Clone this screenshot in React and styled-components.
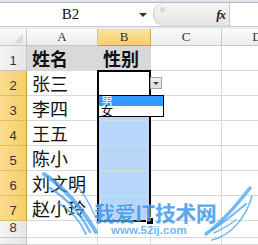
import React from 'react'
import styled, { createGlobalStyle } from 'styled-components'

const GlobalStyle = createGlobalStyle`
  html, body { margin: 0; padding: 0; background: #fff; }
  body { width: 258px; height: 245px; overflow: hidden; }
  * { box-sizing: border-box; }
`

const CJK = `"Noto Sans CJK SC", "Noto Sans", sans-serif`

const Window = styled.div`
  position: relative;
  width: 258px;
  height: 245px;
  overflow: hidden;
  display: flex;
  flex-direction: column;
  background: #fff;
`

const TopStrip = styled.div`
  flex: 0 0 3px;
  background: linear-gradient(#eef0f3, #cfd5dc);
  border-bottom: 1px solid #b9c0c9;
`

const FormulaRow = styled.div`
  flex: 0 0 24px;
  display: flex;
  background: #fff;
  border-bottom: 1px solid #c9ccd1;
`

const NameBox = styled.div`
  width: 153px;
  display: flex;
  align-items: center;
  font-family: "Liberation Serif", serif;
  font-size: 15px;
  color: #111;
`

const NameText = styled.span`
  flex: 1;
  text-align: center;
  padding-left: 2px;
`

const NameArrow = styled.span`
  width: 0;
  height: 0;
  margin-right: 6px;
  border-left: 4px solid transparent;
  border-right: 4px solid transparent;
  border-top: 4px solid #333;
`

const FxArea = styled.div`
  width: 77px;
  display: flex;
  align-items: center;
  justify-content: flex-end;
  padding-right: 4px;
  background: linear-gradient(#f6f6f6, #e3e3e3);
  border-left: 1px solid #c4c4c4;
  border-top-left-radius: 12px;
  border-bottom-left-radius: 12px;
  border-right: 1px solid #c9c9c9;
  position: relative;
`

const Grip = styled.span`
  position: absolute;
  left: 6px;
  top: 4px;
  width: 5px;
  height: 5px;
  border-radius: 50%;
  background: #d6d6d6;
`

const Fx = styled.span`
  font-family: "Liberation Serif", serif;
  font-style: italic;
  font-weight: bold;
  font-size: 13px;
  color: #222;
  letter-spacing: -1px;
`

const FormulaInput = styled.div`
  flex: 1;
  background: #fff;
`

const Gap = styled.div`
  flex: 0 0 2px;
  background: #e9ebee;
`

const Sheet = styled.div`
  flex: 1 1 auto;
  min-height: 0;
  display: grid;
  grid-template-columns: 27px 71px 53px 71px 71px;
  grid-template-rows: 17px repeat(7, 25px) 17px 1fr;
  position: relative;
`

const Corner = styled.div`
  grid-row: 1;
  grid-column: 1;
  position: relative;
  background: linear-gradient(#fafafa, #ececec);
  border-right: 1px solid #c6c6c6;
  border-bottom: 1px solid #c6c6c6;
  &::after {
    content: '';
    position: absolute;
    right: 3px;
    bottom: 2px;
    border-left: 9px solid transparent;
    border-bottom: 9px solid #d8d8d8;
  }
`

const ColHead = styled.div`
  grid-row: 1;
  grid-column: ${p => p.$col};
  display: flex;
  align-items: center;
  justify-content: center;
  font-family: "Liberation Serif", serif;
  font-size: 13px;
  color: #333;
  background: ${p => p.$active
    ? 'linear-gradient(#fbe49f, #f6cf6d)'
    : 'linear-gradient(#fbfbfb, #ededed)'};
  border-right: 1px solid ${p => p.$active ? '#d3a94c' : '#c6c6c6'};
  border-bottom: 1px solid ${p => p.$active ? '#c79b3a' : '#c6c6c6'};
`

const RowHead = styled.div`
  grid-row: ${p => p.$row};
  grid-column: 1;
  display: flex;
  align-items: flex-end;
  justify-content: center;
  padding-bottom: 2px;
  font-family: "Liberation Sans", sans-serif;
  font-size: 13px;
  color: #333;
  background: ${p => p.$active
    ? 'linear-gradient(90deg, #fbdc8e, #f7ce6c)'
    : 'linear-gradient(90deg, #f3f3f3, #e6e6e6)'};
  border-right: 1px solid ${p => p.$active ? '#c79b3a' : '#c6c6c6'};
  border-bottom: 1px solid ${p => p.$active ? '#e2bb5c' : '#c6c6c6'};
`

const Cell = styled.div`
  grid-row: ${p => p.$row};
  grid-column: ${p => p.$col};
  position: relative;
  display: flex;
  align-items: flex-end;
  padding: 0 0 1px 5px;
  font-family: ${CJK};
  font-size: 18px;
  line-height: 22px;
  font-weight: ${p => p.$bold ? 700 : 400};
  color: #111;
  background: ${p => p.$fill || '#fff'};
  border-right: 1px solid #d9d9d9;
  border-bottom: 1px solid #d9d9d9;
  white-space: nowrap;
`

const Selection = styled.div`
  grid-column: 3;
  grid-row: 3 / 9;
  margin: -1px 0 -1px -1px;
  border: 2px solid #000;
  position: relative;
  pointer-events: none;
  z-index: 2;
`

const FillHandle = styled.span`
  position: absolute;
  right: -4px;
  bottom: -4px;
  width: 6px;
  height: 6px;
  background: #000;
  outline: 1px solid #fff;
`

const DropButton = styled.div`
  position: absolute;
  left: 100%;
  top: 6px;
  width: 12px;
  height: 12px;
  display: flex;
  align-items: center;
  justify-content: center;
  background: linear-gradient(#f1f1f1, #dcdcdc);
  border: 1px solid #a5a5a5;
  z-index: 3;
  &::after {
    content: '';
    border-left: 3px solid transparent;
    border-right: 3px solid transparent;
    border-top: 3px solid #444;
  }
`

const DropList = styled.ul`
  position: absolute;
  left: 0;
  top: 100%;
  width: 66px;
  margin: 0;
  padding: 0;
  list-style: none;
  background: #fff;
  border: 1px solid #000;
  z-index: 4;
`

const DropItem = styled.li`
  height: 10px;
  line-height: 10px;
  padding-left: 2px;
  font-family: ${CJK};
  font-size: 12px;
  color: ${p => p.$selected ? '#fff' : '#000'};
  background: ${p => p.$selected ? '#3399ff' : '#fff'};
`

const Watermark = styled.div`
  position: absolute;
  left: 0;
  top: 0;
  width: 258px;
  height: 245px;
  pointer-events: none;
  z-index: 5;
`

const WaterTitle = styled.div`
  position: absolute;
  left: 94px;
  top: 201px;
  font-family: ${CJK};
  font-weight: 900;
  font-size: 21px;
  line-height: 22px;
  letter-spacing: -0.5px;
  color: rgba(58, 150, 235, 0.85);
  -webkit-text-stroke: 0.5px rgba(255, 255, 255, 0.6);
`

const WaterUrl = styled.div`
  position: absolute;
  left: 111px;
  top: 224px;
  font-family: "Liberation Sans", sans-serif;
  font-weight: bold;
  font-size: 11.5px;
  color: rgba(88, 170, 240, 0.85);
`

const Wings = styled.svg`
  position: absolute;
  left: 0;
  top: 0;
`

const rows = [
  ['姓名', '性别'],
  ['张三', ''],
  ['李四', ''],
  ['王五', ''],
  ['陈小', ''],
  ['刘文明', ''],
  ['赵小玲', ''],
]

const BLUE = '#b7d6fa'

export default function App() {
  return (
    <>
      <GlobalStyle />
      <Window>
        <TopStrip />
        <FormulaRow>
          <NameBox>
            <NameText>B2</NameText>
            <NameArrow />
          </NameBox>
          <FxArea>
            <Grip />
            <Fx>fx</Fx>
          </FxArea>
          <FormulaInput />
        </FormulaRow>
        <Gap />
        <Sheet>
          <Corner />
          <ColHead $col={2}>A</ColHead>
          <ColHead $col={3} $active>B</ColHead>
          <ColHead $col={4}>C</ColHead>
          <ColHead $col={5}>D</ColHead>

          {rows.map(([a, b], i) => {
            const n = i + 1
            const r = n + 1
            const header = n === 1
            return (
              <React.Fragment key={n}>
                <RowHead $row={r} $active={!header}>{n}</RowHead>
                <Cell $row={r} $col={2} $bold={header} $fill={header ? '#d9d9d9' : null}>{a}</Cell>
                <Cell
                  $row={r}
                  $col={3}
                  $bold={header}
                  $fill={header ? '#d9d9d9' : n === 2 ? '#fff' : BLUE}
                >
                  {b}
                  {n === 2 && (
                    <>
                      <DropButton />
                      <DropList>
                        <DropItem $selected>男</DropItem>
                        <DropItem>女</DropItem>
                      </DropList>
                    </>
                  )}
                </Cell>
                <Cell $row={r} $col={4} />
                <Cell $row={r} $col={5} />
              </React.Fragment>
            )
          })}

          {[9, 10].map(r => (
            <React.Fragment key={r}>
              <RowHead $row={r}>{r === 9 ? 8 : ''}</RowHead>
              <Cell $row={r} $col={2} />
              <Cell $row={r} $col={3} />
              <Cell $row={r} $col={4} />
              <Cell $row={r} $col={5} />
            </React.Fragment>
          ))}

          <Selection>
            <FillHandle />
          </Selection>
        </Sheet>

        <Watermark>
          <Wings width="258" height="245" viewBox="0 0 258 245">
            <g fill="none" stroke="rgba(70,160,240,0.75)" strokeLinecap="round">
              <path d="M44 174 C62 186 80 205 96 232" strokeWidth="4" />
              <path d="M50 188 C66 198 80 212 90 232" strokeWidth="2.5" />
              <path d="M58 203 C70 210 80 220 86 234" strokeWidth="2" />
              <path d="M72 180 C82 190 90 204 96 218" strokeWidth="1.5" />
              <path d="M250 188 C236 206 222 222 206 234" strokeWidth="3.5" />
              <path d="M246 204 C234 214 222 224 212 230" strokeWidth="2" />
              <path d="M236 220 C228 226 220 230 214 233" strokeWidth="1.5" />
              <path d="M252 196 C246 218 230 236 212 240" strokeWidth="1.5" />
            </g>
          </Wings>
          <WaterTitle>我爱IT技术网</WaterTitle>
          <WaterUrl>www.52ij.com</WaterUrl>
        </Watermark>
      </Window>
    </>
  )
}
